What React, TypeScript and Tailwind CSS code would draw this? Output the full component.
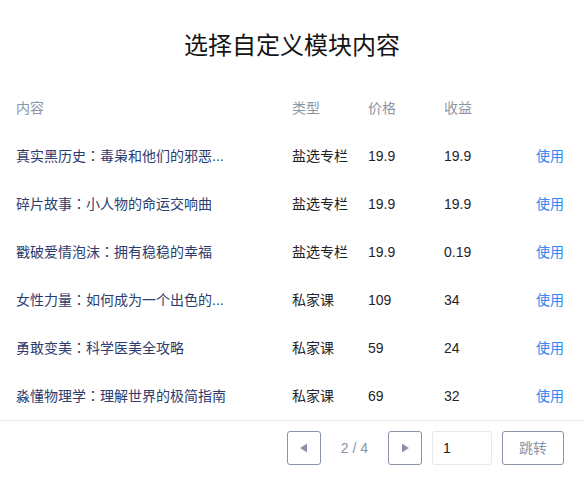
import { useState } from 'react';

const rows = [
  { title: '真实黑历史：毒枭和他们的邪恶...', type: '盐选专栏', price: '19.9', income: '19.9' },
  { title: '碎片故事：小人物的命运交响曲', type: '盐选专栏', price: '19.9', income: '19.9' },
  { title: '戳破爱情泡沫：拥有稳稳的幸福', type: '盐选专栏', price: '19.9', income: '0.19' },
  { title: '女性力量：如何成为一个出色的...', type: '私家课', price: '109', income: '34' },
  { title: '勇敢变美：科学医美全攻略', type: '私家课', price: '59', income: '24' },
  { title: '淼懂物理学：理解世界的极简指南', type: '私家课', price: '69', income: '32' },
];

const cols = 'grid grid-cols-[276px_76px_76px_1fr_auto] items-center pl-4 pr-5';

// full-width colon drawn centred, as in the reference
function Title({ text }: { text: string }) {
  const [head, tail] = text.split('：');
  return (
    <span className="text-[#2d3c6e] whitespace-nowrap">
      {head}
      <span style={{ fontFamily: '"Noto Sans CJK TC", sans-serif' }}>：</span>
      {tail}
    </span>
  );
}

export default function App() {
  const [page, setPage] = useState('1');

  return (
    <div
      className="w-[584px] h-[491px] bg-white text-[14px] text-[#1f2329]"
      style={{ fontFamily: '"Liberation Sans", "Noto Sans CJK SC", sans-serif' }}
    >
      {/* Title */}
      <h1 className="pt-[30px] text-center text-[24px] leading-[32px] text-[#141414]">
        选择自定义模块内容
      </h1>

      {/* Table */}
      <div className="mt-[22px]">
        <div className={`${cols} h-12 text-[#8b95a8]`}>
          <span>内容</span>
          <span>类型</span>
          <span>价格</span>
          <span>收益</span>
          <span />
        </div>
        {rows.map((row) => (
          <div key={row.title} className={`${cols} h-12`}>
            <Title text={row.title} />
            <span>{row.type}</span>
            <span>{row.price}</span>
            <span>{row.income}</span>
            <button className="text-[#2f86f6]">使用</button>
          </div>
        ))}
      </div>

      {/* Pagination */}
      <div className="border-t border-[#e8eaee] pt-[10px] pr-5 flex items-center justify-end">
        <button className="w-[34px] h-[34px] rounded-[3px] border border-[#8a94a8] flex items-center justify-center">
          <svg width="9" height="10" viewBox="0 0 9 10">
            <path d="M8 0.5 L8 9.5 L1 5 Z" fill="#8a94a8" />
          </svg>
        </button>
        <span className="mx-5 text-[#8a94a8]">2 / 4</span>
        <button className="w-[34px] h-[34px] rounded-[3px] border border-[#8a94a8] flex items-center justify-center">
          <svg width="9" height="10" viewBox="0 0 9 10">
            <path d="M1 0.5 L1 9.5 L8 5 Z" fill="#8a94a8" />
          </svg>
        </button>
        <input
          value={page}
          onChange={(e) => setPage(e.target.value)}
          className="ml-[10px] w-[60px] h-[34px] rounded-[3px] border border-[#e5e7eb] px-[10px] outline-none text-[#1a1a1a]"
        />
        <button className="ml-[10px] w-[62px] h-[34px] rounded-[3px] border border-[#8a94a8] text-[#8a94a8]">
          跳转
        </button>
      </div>
    </div>
  );
}
